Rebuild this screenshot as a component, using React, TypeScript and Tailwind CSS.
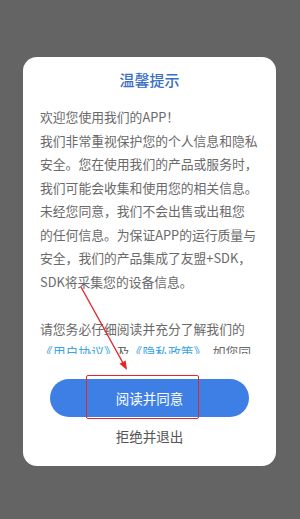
import React from 'react';

const bodyLines: string[] = [
  '欢迎您使用我们的APP！',
  '我们非常重视保护您的个人信息和隐私',
  '安全。您在使用我们的产品或服务时，',
  '我们可能会收集和使用您的相关信息。',
  '未经您同意，我们不会出售或出租您',
  '的任何信息。为保证APP的运行质量与',
  '安全，我们的产品集成了友盟+SDK，',
  'SDK将采集您的设备信息。',
  '',
  '请您务必仔细阅读并充分了解我们的',
];

// red annotation arrow drawn over the screenshot
const Arrow: React.FC = () => (
  <svg
    className="absolute inset-0 pointer-events-none"
    width="300"
    height="519"
    viewBox="0 0 300 519"
  >
    <line x1="81" y1="287" x2="123" y2="363" stroke="#e0282c" strokeWidth="1.4" />
    <polygon points="127,370 119.5,363.8 125.7,360.4" fill="#e0282c" />
  </svg>
);

export default function App() {
  return (
    <div
      className="relative w-full h-[519px] bg-[#646464] overflow-hidden"
      style={{ fontFamily: '"Noto Sans CJK SC", "Noto Sans", sans-serif' }}
    >
      <div className="ml-[23px] mt-[57px] w-[253px] h-[409px] bg-white rounded-[14px] flex flex-col items-center">
        <div className="mt-[12px] text-[15px] leading-[22px] text-[#3a6fc4] font-medium">温馨提示</div>

        <div className="mt-[14px] h-[249px] w-full overflow-hidden px-[17px] text-[12.8px] leading-[23.5px] text-[#6a6a6a]">
          {bodyLines.map((line, i) => (
            <div key={i} className="whitespace-nowrap h-[23.5px]">
              {line}
            </div>
          ))}
          <div className="whitespace-nowrap h-[23.5px]">
            <span className="text-[#3ba3e6]">《用户协议》</span>
            <span>及</span>
            <span className="text-[#3ba3e6]">《隐私政策》</span>
            <span>，如您同</span>
          </div>
        </div>

        <button className="mt-[25px] w-[199px] h-[38px] rounded-full bg-[#3e7fe6] text-white text-[13.5px] flex items-center justify-center">
          阅读并同意
        </button>
        <div className="mt-[8px] text-[13.5px] leading-[22px] text-[#555555]">拒绝并退出</div>
      </div>

      {/* annotation box */}
      <div className="absolute left-[86px] top-[375px] w-[113px] h-[44px] border-[1.5px] border-[#e0282c] rounded-[2px]" />
      <Arrow />
    </div>
  );
}
